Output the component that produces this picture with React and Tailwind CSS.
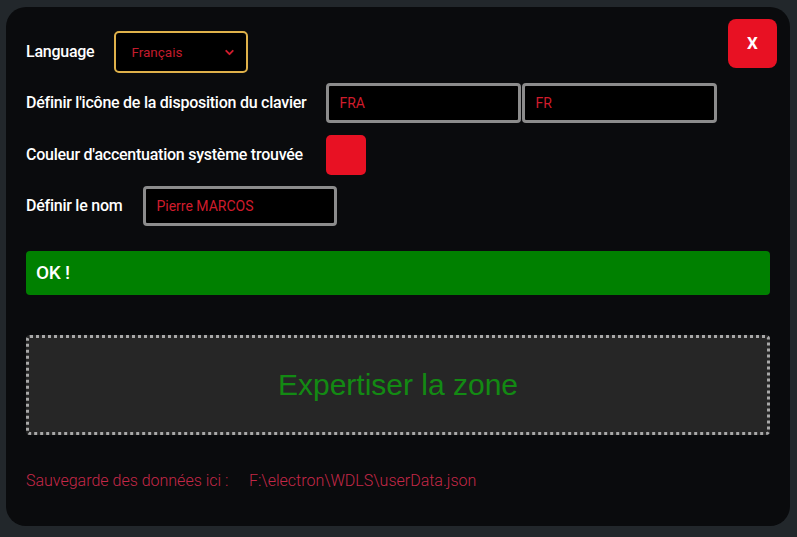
import { ChevronDown } from 'lucide-react';

const label = 'text-[16px] font-medium text-white tracking-[-0.25px]';
const field =
  'h-10 rounded-[4px] border-[3px] border-[#8c8c8c] bg-black px-[10px] text-[14px] text-[#d01c2c] outline-none';

export default function App() {
  return (
    <div className="h-[537px] w-[797px] bg-[#22272b] pl-[6px] pt-[7px] font-['Roboto',sans-serif]">
      <div className="relative h-[519px] w-[784px] rounded-[20px] bg-[#0a0b0d] pl-[20px] pt-[24px]">
        <button className="absolute right-[13px] top-[12px] flex h-[49px] w-[49px] items-center justify-center rounded-[8px] bg-[#e81123] text-[17px] font-bold text-white">
          X
        </button>

        <div className="flex items-center">
          <span className={label}>Language</span>
          <div className="ml-[20px] flex h-[42px] w-[134px] items-center justify-between rounded-[5px] border-2 border-[#dfb14a] bg-black pl-[15px] pr-[10px]">
            <span className="text-[13.5px] text-[#c21c2c]">Français</span>
            <ChevronDown size={13} strokeWidth={3.5} className="text-[#d01c2c]" />
          </div>
        </div>

        <div className="mt-[10px] flex items-center">
          <span className={label}>Définir l'icône de la disposition du clavier</span>
          <div className={`${field} ml-[20px] flex w-[195px] items-center`}>FRA</div>
          <div className={`${field} ml-[1px] flex w-[195px] items-center`}>FR</div>
        </div>

        <div className="mt-[12px] flex items-center">
          <span className={label}>Couleur d'accentuation système trouvée</span>
          <div className="ml-[23px] h-10 w-10 rounded-[5px] bg-[#e81123]" />
        </div>

        <div className="mt-[11px] flex items-center">
          <span className={label}>Définir le nom</span>
          <div className={`${field} ml-[21px] flex w-[194px] items-center`}>Pierre MARCOS</div>
        </div>

        <div className="mt-[25px] flex h-[44px] w-[744px] items-center rounded-[4px] bg-[#008000] pl-[10px] text-[19px] font-medium text-white tracking-[-0.3px]">
          OK !
        </div>

        <div className="mt-[40px] flex h-[100px] w-[744px] items-center justify-center rounded-[4px] border-[3px] border-dotted border-[#a8a8a8] bg-[#262626] pb-[2px] font-['Liberation_Sans',sans-serif] text-[30px] text-[#138a13]">
          Expertiser la zone
        </div>

        <div className="mt-[34px] flex text-[16px] font-light text-[#c42848]">
          <span className="w-[223px]">Sauvegarde des données ici :</span>
          <span>F:\electron\WDLS\userData.json</span>
        </div>
      </div>
    </div>
  );
}
